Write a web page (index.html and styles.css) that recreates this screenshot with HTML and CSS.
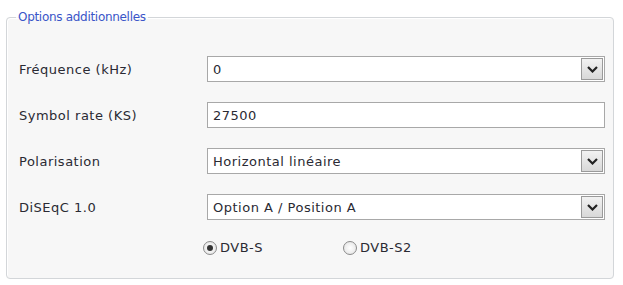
FILE: index.html
```html
<!DOCTYPE html>
<html lang="fr">
<head>
    <meta charset="UTF-8">
    <title>Options additionnelles</title>
    <link rel="stylesheet" href="styles.css">
</head>
<body>
    <fieldset class="options">
        <legend>Options additionnelles</legend>

        <div class="row">
            <label class="field-label">Fréquence (kHz)</label>
            <div class="combo">
                <span class="combo-value">0</span>
                <span class="combo-button">
                    <svg width="11" height="7" viewBox="0 0 11 7"><path d="M1 1 L5.5 5.5 L10 1" fill="none" stroke="#222" stroke-width="2.2"/></svg>
                </span>
            </div>
        </div>

        <div class="row">
            <label class="field-label">Symbol rate (KS)</label>
            <div class="text-box">27500</div>
        </div>

        <div class="row">
            <label class="field-label">Polarisation</label>
            <div class="combo">
                <span class="combo-value">Horizontal linéaire</span>
                <span class="combo-button">
                    <svg width="11" height="7" viewBox="0 0 11 7"><path d="M1 1 L5.5 5.5 L10 1" fill="none" stroke="#222" stroke-width="2.2"/></svg>
                </span>
            </div>
        </div>

        <div class="row">
            <label class="field-label">DiSEqC 1.0</label>
            <div class="combo">
                <span class="combo-value">Option A / Position A</span>
                <span class="combo-button">
                    <svg width="11" height="7" viewBox="0 0 11 7"><path d="M1 1 L5.5 5.5 L10 1" fill="none" stroke="#222" stroke-width="2.2"/></svg>
                </span>
            </div>
        </div>

        <div class="radios">
            <span class="radio-item"><span class="radio checked"></span>DVB-S</span>
            <span class="radio-item"><span class="radio"></span>DVB-S2</span>
        </div>
    </fieldset>
</body>
</html>
```

FILE: styles.css
```css
body {
    margin: 0;
    padding: 0;
    background-color: #ffffff;
    font-family: 'DejaVu Sans', sans-serif;
    font-size: 13px;
    letter-spacing: 0.5px;
    color: #2a2a33;
}

.options {
    margin: 10px 9px 6px 6px;
    padding: 32px 8px 23px 12px;
    border: 1px solid #d3d6d9;
    border-radius: 4px;
    background-color: #f7f7f7;
    box-shadow: 1px 1px 0 #ffffff inset;
}

.options legend {
    color: #3a55c8;
    padding: 0 2px;
    margin-left: -3px;
    font-size: 12px;
    letter-spacing: -0.3px;
}

.row {
    display: flex;
    align-items: center;
    height: 26px;
    margin-bottom: 20px;
}

.field-label {
    width: 188px;
}

.combo,
.text-box {
    flex: 1;
    height: 24px;
    border: 1px solid #a8a8a8;
    background-color: #ffffff;
    display: flex;
    align-items: center;
    box-sizing: content-box;
}

.combo-value,
.text-box {
    padding-left: 5px;
}

.combo-value {
    flex: 1;
}

.combo-button {
    width: 20px;
    height: 20px;
    margin-right: 1px;
    border: 1px solid #9a9a9a;
    background: linear-gradient(#f2f2f2, #d8d8d8);
    display: flex;
    align-items: center;
    justify-content: center;
}

.radios {
    display: flex;
    padding-left: 184px;
    margin-top: 2px;
}

.radio-item {
    display: flex;
    align-items: center;
    width: 140px;
}

.radio {
    width: 12px;
    height: 12px;
    border: 1px solid #8a8a8a;
    border-radius: 50%;
    background: radial-gradient(#ffffff, #e0e0e0);
    margin-right: 3px;
    position: relative;
}

.radio.checked::after {
    content: "";
    position: absolute;
    left: 3px;
    top: 3px;
    width: 6px;
    height: 6px;
    border-radius: 50%;
    background-color: #333;
}
```
